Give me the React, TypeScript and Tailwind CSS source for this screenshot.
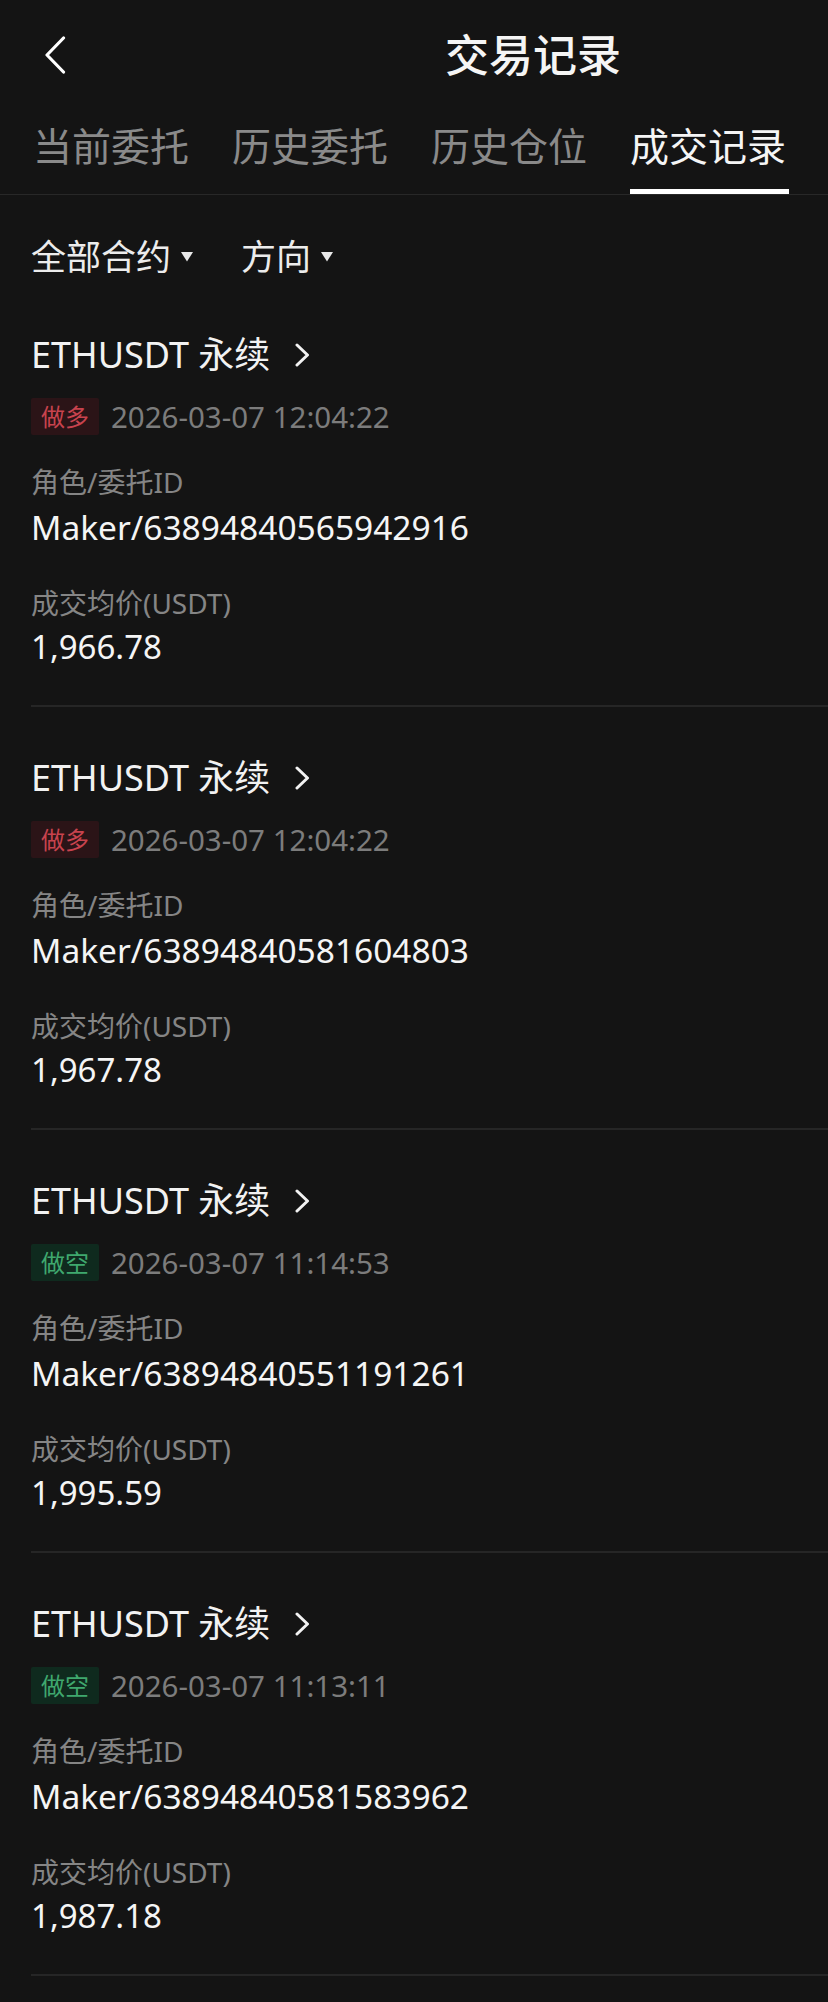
import React from "react";

type Trade = {
  side: "long" | "short";
  time: string;
  id: string;
  price: string;
};

const trades: Trade[] = [
  { side: "long", time: "2026-03-07 12:04:22", id: "Maker/63894840565942916", price: "1,966.78" },
  { side: "long", time: "2026-03-07 12:04:22", id: "Maker/63894840581604803", price: "1,967.78" },
  { side: "short", time: "2026-03-07 11:14:53", id: "Maker/63894840551191261", price: "1,995.59" },
  { side: "short", time: "2026-03-07 11:13:11", id: "Maker/63894840581583962", price: "1,987.18" },
];

function Caret() {
  return (
    <svg width="14" height="11" viewBox="0 0 14 11" className="ml-[9px]">
      <path d="M1 1 H13 L7 10.5 Z" fill="#e8e8e8" />
    </svg>
  );
}

function TradeCard({ t }: { t: Trade }) {
  const long = t.side === "long";
  return (
    <div className="ml-[31px] border-b-2 border-[#262626] pt-[46px] pb-[38px]">
      <div className="flex h-[50px] items-center">
        <span className="text-[36px] leading-[50px] text-[#f2f2f2]">ETHUSDT 永续</span>
        <svg width="17" height="24" viewBox="0 0 17 24" className="ml-[24px]">
          <path d="M3 2 L13.5 12 L3 22" fill="none" stroke="#f2f2f2" strokeWidth="3" strokeLinecap="round" strokeLinejoin="round" />
        </svg>
      </div>
      <div className="mt-[18px] flex h-[37px] items-center">
        <span
          className={
            long
              ? "flex h-[37px] items-center rounded-[2px] bg-[#2b1417] px-[10px] text-[24px] leading-none text-[#c8434e]"
              : "flex h-[37px] items-center rounded-[2px] bg-[#0f2a1e] px-[10px] text-[24px] leading-none text-[#3fa86e]"
          }
        >
          {long ? "做多" : "做空"}
        </span>
        <span className="ml-[12px] text-[29.5px] leading-none text-[#7c7c7c]">{t.time}</span>
      </div>
      <div className="mt-[29px] text-[28px] leading-[36px] text-[#858585]">角色/委托ID</div>
      <div className="mt-[7px] text-[33.5px] leading-[40px] text-[#f5f5f5]">{t.id}</div>
      <div className="mt-[38px] text-[28px] leading-[36px] text-[#858585]">成交均价(USDT)</div>
      <div className="mt-[6px] text-[33px] leading-[40px] text-[#f5f5f5]">{t.price}</div>
    </div>
  );
}

export default function App() {
  const tabs = ["当前委托", "历史委托", "历史仓位", "成交记录"];
  return (
    <div className="min-h-[2002px] w-full bg-[#141414] font-['Noto_Sans','Noto_Sans_CJK_SC',sans-serif] text-white">
      <div className="flex h-[110px] items-center pl-[44px]">
        <svg width="22" height="38" viewBox="0 0 22 38">
          <path d="M19.5 2 L3 19 L19.5 36" fill="none" stroke="#ffffff" strokeWidth="3.2" strokeLinecap="round" strokeLinejoin="round" />
        </svg>
        <div className="ml-[379px] text-[44px] font-medium leading-none text-[#f5f5f5]">交易记录</div>
      </div>

      <div className="flex h-[85px] gap-[43px] border-b border-[#282828] pl-[33px]">
        {tabs.map((tab, i) => {
          const active = i === 3;
          return (
            <div key={tab} className="relative h-full">
              <div
                className={
                  active
                    ? "pt-[12px] text-[39px] leading-[48px] text-[#f5f5f5]"
                    : "pt-[12px] text-[39px] leading-[48px] text-[#8a8a8a]"
                }
              >
                {tab}
              </div>
              {active && <div className="absolute bottom-0 left-0 right-[-3px] h-[5px] bg-white" />}
            </div>
          );
        })}
      </div>

      <div className="mt-[33px] flex h-[56px] items-center pl-[31px] text-[35px] text-[#ececec]">
        <span className="leading-none">全部合约</span>
        <Caret />
        <span className="ml-[47px] leading-none">方向</span>
        <Caret />
      </div>

      {trades.map((t, i) => (
        <TradeCard key={i} t={t} />
      ))}
    </div>
  );
}
